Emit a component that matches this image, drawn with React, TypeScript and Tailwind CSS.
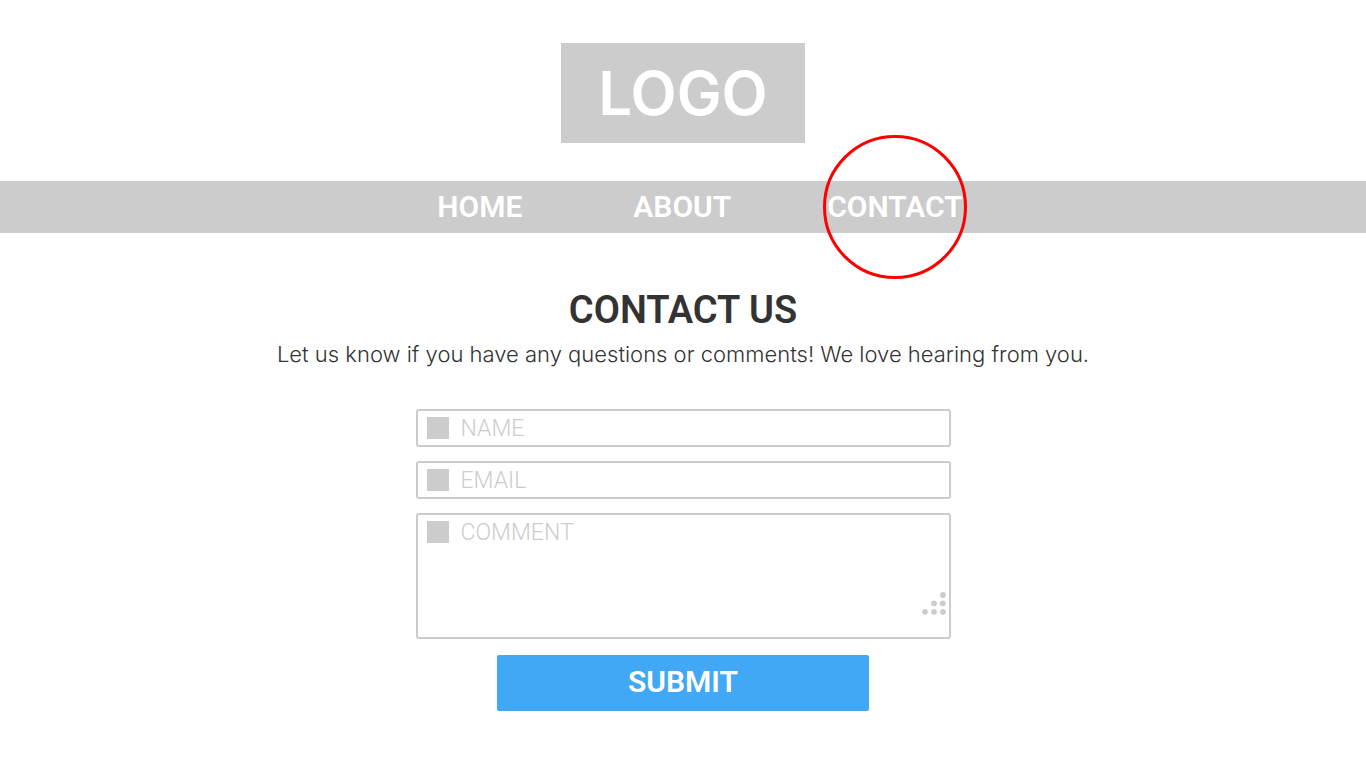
const FieldMark = () => (
  <span aria-hidden="true" className="mt-1.5 size-[22px] shrink-0 bg-[#cccccc]" />
);

const boxClass = 'flex rounded-[3px] border-2 border-[#cccccc] bg-white pl-[9px]';
const fieldClass =
  'min-w-0 flex-1 bg-transparent pl-3 pt-0.5 text-[23px] font-light leading-8 text-[#333333] outline-none placeholder:text-[#cccccc] placeholder:opacity-100';

export default function App() {
  return (
    <div className="flex min-h-screen flex-col items-center bg-white font-['Roboto','Liberation_Sans',sans-serif] text-[#333333]">
      <header className="flex w-full flex-col items-center pt-[43px]">
        <a
          href="#home"
          className="flex h-[100px] w-[244px] items-center justify-center bg-[#cccccc] font-['Inter',sans-serif] text-[60px] font-semibold leading-none text-white"
        >
          LOGO
        </a>
        <nav className="mt-[38px] flex h-[52px] w-full items-center justify-center bg-[#cccccc] pl-[34px] text-[30px] font-semibold leading-none text-white">
          <a href="#home">HOME</a>
          <a href="#about" className="ml-[111px]">
            ABOUT
          </a>
          <a href="#contact" aria-current="page" className="relative ml-24">
            CONTACT
            <span className="pointer-events-none absolute left-1/2 top-1/2 size-36 -translate-x-1/2 -translate-y-1/2 rounded-full border-3 border-[#ff0000]" />
          </a>
        </nav>
      </header>

      <main className="flex w-full flex-col items-center px-4 pb-14">
        <h1 className="mt-[55px] text-center text-[38px] font-semibold leading-[44px]">CONTACT US</h1>
        <p className="mt-1.5 text-center font-['Inter',sans-serif] text-[22px] font-light leading-8">
          Let us know if you have any questions or comments! We love hearing from you.
        </p>

        <form
          className="mt-[39px] flex w-full max-w-[535px] flex-col gap-3.5"
          onSubmit={(event) => event.preventDefault()}
        >
          <div className={boxClass}>
            <FieldMark />
            <input type="text" name="name" aria-label="Name" placeholder="NAME" className={fieldClass} />
          </div>
          <div className={boxClass}>
            <FieldMark />
            <input type="email" name="email" aria-label="Email" placeholder="EMAIL" className={fieldClass} />
          </div>
          <div className={`${boxClass} relative`}>
            <FieldMark />
            <textarea
              name="comment"
              aria-label="Comment"
              placeholder="COMMENT"
              className={`${fieldClass} h-[122px] resize-none`}
            />
            <svg
              aria-hidden="true"
              viewBox="0 0 24 24"
              fill="#cccccc"
              className="pointer-events-none absolute bottom-[22px] right-[3px] size-6"
            >
              <circle cx="21" cy="4" r="2.9" />
              <circle cx="12" cy="12.4" r="2.9" />
              <circle cx="20.8" cy="12.4" r="2.9" />
              <circle cx="3" cy="20.8" r="2.9" />
              <circle cx="12" cy="20.8" r="2.9" />
              <circle cx="21" cy="20.8" r="2.9" />
            </svg>
          </div>
          <button
            type="submit"
            className="mt-0.5 h-14 w-full max-w-[372px] self-center rounded-[2px] bg-[#41a8f5] pb-0.5 text-[30px] font-semibold leading-none text-white"
          >
            SUBMIT
          </button>
        </form>
      </main>
    </div>
  );
}
